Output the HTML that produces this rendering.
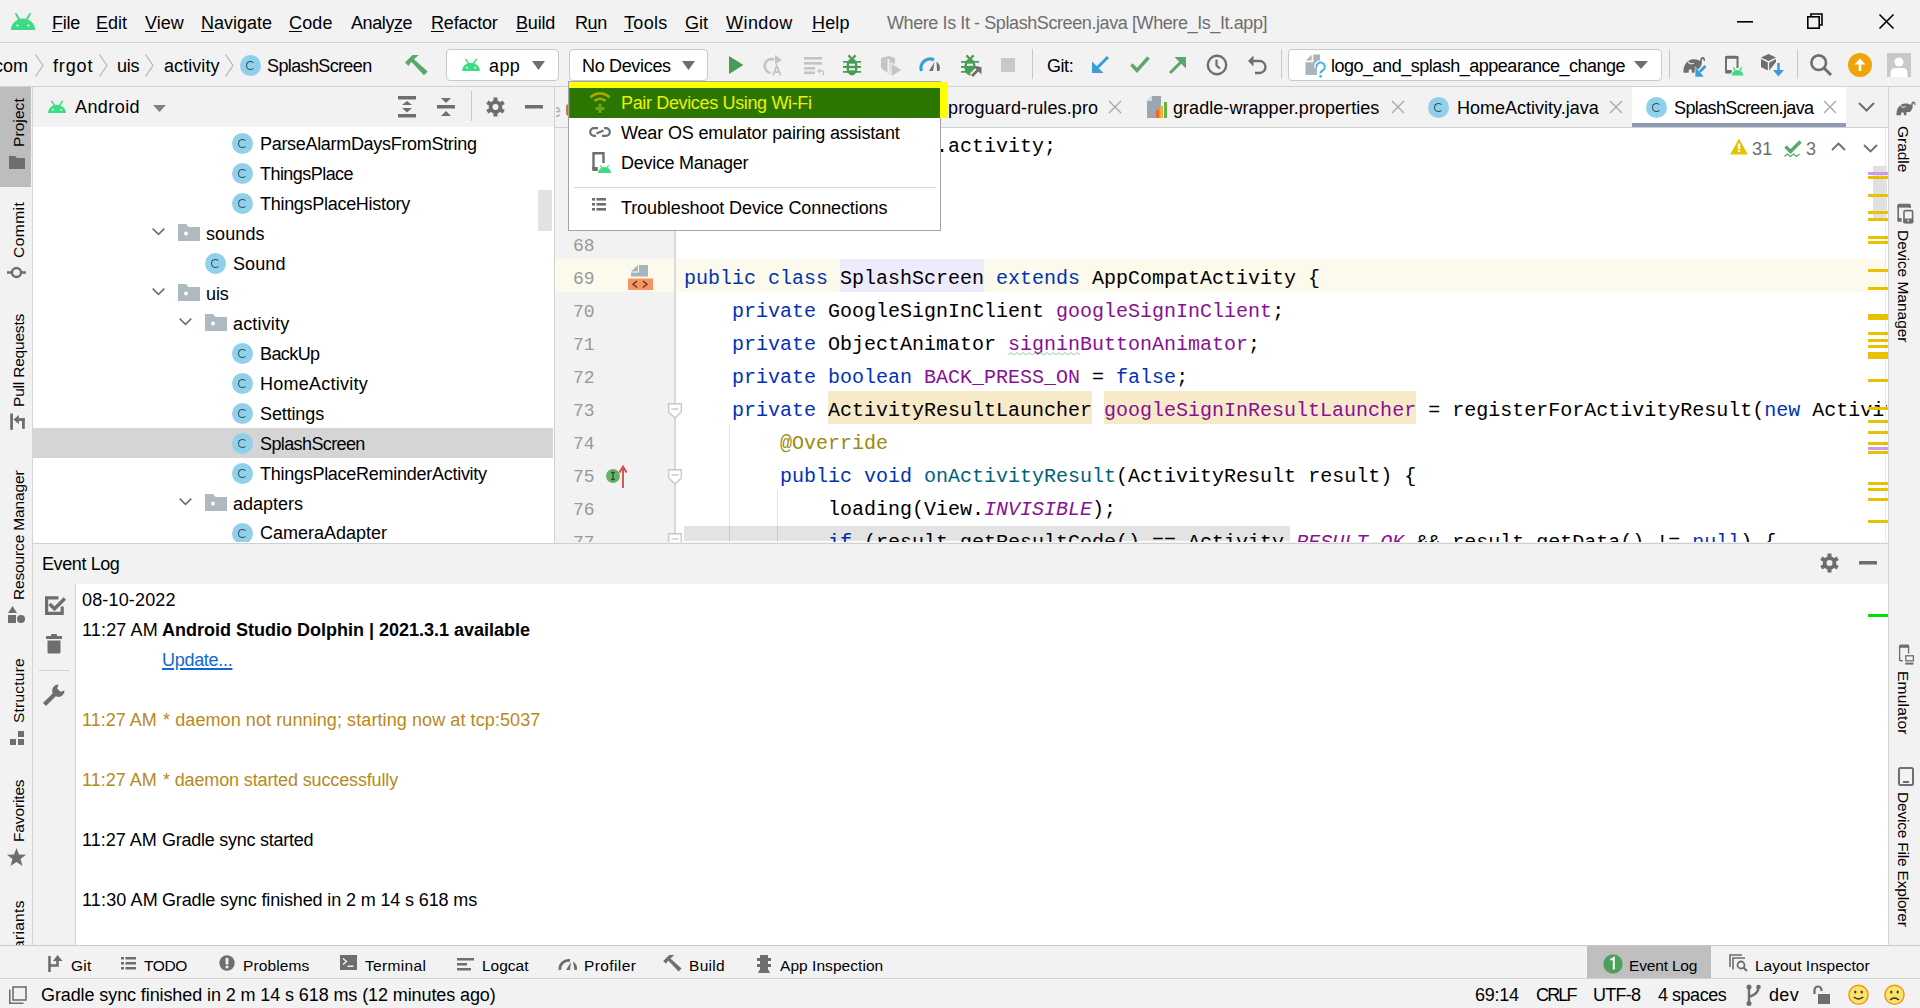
<!DOCTYPE html><html><head><meta charset="utf-8">
<style>
*{margin:0;padding:0;box-sizing:border-box}
html,body{width:1920px;height:1008px;overflow:hidden;background:#f2f2f2;font-family:"Liberation Sans",sans-serif;color:#000;position:relative}
.a{position:absolute}
.t{position:absolute;white-space:nowrap;font-size:18px;line-height:30px}
.m{text-decoration:underline;text-underline-offset:2px;text-decoration-thickness:1px}
.hl{position:absolute;height:1px;background:#d1d1d1}
.vl{position:absolute;width:1px;background:#d1d1d1}
.cm{position:absolute;white-space:pre;font-family:"Liberation Mono",monospace;font-size:20px;line-height:33px}
.k{color:#0033b3}.f{color:#871094}.an{color:#9e880d}.fn{color:#00627a}
.ln{position:absolute;font-family:"Liberation Mono",monospace;font-size:18px;line-height:33px;color:#999;white-space:nowrap}
svg{position:absolute;overflow:visible}
.ci{position:absolute;width:21px;height:21px;border-radius:50%;background:#8fd0ea}
.ci::after{content:"";position:absolute;left:6px;top:6px;width:9px;height:9px;border:1.5px solid #3a4a52;border-right-color:transparent;border-radius:50%;box-sizing:border-box}
.vt{position:absolute;white-space:nowrap;font-size:15.5px;line-height:20px;transform-origin:0 0}
.vup{transform:rotate(-90deg)}
.vdn{transform:rotate(90deg)}
</style></head><body>

<!-- ===== MENU BAR ===== -->
<svg style="left:11px;top:13px" width="24" height="17" viewBox="0 0 24 17"><path d="M0 17 A12 11.5 0 0 1 24 17 Z" fill="#3ddc84"></path><path d="M5 1 L8 6 M19 1 L16 6" stroke="#3ddc84" stroke-width="2" stroke-linecap="round"></path><circle cx="6.5" cy="12.5" r="1.1" fill="#fff"></circle><circle cx="17.5" cy="12.5" r="1.1" fill="#fff"></circle></svg>
<div class="t" style="left: 52px; top: 8px; letter-spacing: -0.27px;"><span class="m">F</span>ile</div>
<div class="t" style="left: 96px; top: 8px;"><span class="m">E</span>dit</div>
<div class="t" style="left: 145px; top: 8px;"><span class="m">V</span>iew</div>
<div class="t" style="left: 201px; top: 8px;"><span class="m">N</span>avigate</div>
<div class="t" style="left: 289px; top: 8px; letter-spacing: 0.16px;"><span class="m">C</span>ode</div>
<div class="t" style="left: 351px; top: 8px; letter-spacing: -0.41px;">Analy<span class="m">z</span>e</div>
<div class="t" style="left: 431px; top: 8px; letter-spacing: -0.17px;"><span class="m">R</span>efactor</div>
<div class="t" style="left: 516px; top: 8px; letter-spacing: -0.17px;"><span class="m">B</span>uild</div>
<div class="t" style="left: 575px; top: 8px; letter-spacing: -0.44px;">R<span class="m">u</span>n</div>
<div class="t" style="left: 624px; top: 8px; letter-spacing: 0.33px;"><span class="m">T</span>ools</div>
<div class="t" style="left: 685px; top: 8px; letter-spacing: 0.06px;"><span class="m">G</span>it</div>
<div class="t" style="left: 726px; top: 8px; letter-spacing: 0.44px;"><span class="m">W</span>indow</div>
<div class="t" style="left: 812px; top: 8px; letter-spacing: 0.17px;"><span class="m">H</span>elp</div>
<div class="t" style="left: 887px; top: 8px; color: rgb(110, 110, 110); letter-spacing: -0.41px;">Where Is It - SplashScreen.java [Where_Is_It.app]</div>
<svg style="left:1737px;top:21px" width="16" height="2"><rect width="16" height="1.6" fill="#000"></rect></svg>
<svg style="left:1807px;top:13px" width="16" height="16" viewBox="0 0 16 16"><path d="M4 3 V1 H15 V12 H13" fill="none" stroke="#000" stroke-width="1.6"></path><rect x="0.8" y="3.8" width="11.4" height="11.4" fill="none" stroke="#000" stroke-width="1.6"></rect></svg>
<svg style="left:1879px;top:14px" width="15" height="15" viewBox="0 0 15 15"><path d="M0.5 0.5 L14.5 14.5 M14.5 0.5 L0.5 14.5" stroke="#000" stroke-width="1.6"></path></svg>
<div class="hl" style="left:0;top:42px;width:1920px"></div>

<!-- ===== TOOLBAR ===== -->
<div class="t" style="left:-6px;top:51px">com</div>
<svg style="left:35px;top:54px" width="9" height="23" viewBox="0 0 9 23"><path d="M0.5 0.5 L8 11.5 L0.5 22.5" fill="none" stroke="#b4b4b4" stroke-width="1.2"></path></svg>
<div class="t" style="left: 53px; top: 51px; letter-spacing: 0.87px;">frgot</div>
<svg style="left:99px;top:54px" width="9" height="23" viewBox="0 0 9 23"><path d="M0.5 0.5 L8 11.5 L0.5 22.5" fill="none" stroke="#b4b4b4" stroke-width="1.2"></path></svg>
<div class="t" style="left: 117px; top: 51px; letter-spacing: -0.27px;">uis</div>
<svg style="left:145px;top:54px" width="9" height="23" viewBox="0 0 9 23"><path d="M0.5 0.5 L8 11.5 L0.5 22.5" fill="none" stroke="#b4b4b4" stroke-width="1.2"></path></svg>
<div class="t" style="left: 164px; top: 51px; letter-spacing: 0.07px;">activity</div>
<svg style="left:225px;top:54px" width="9" height="23" viewBox="0 0 9 23"><path d="M0.5 0.5 L8 11.5 L0.5 22.5" fill="none" stroke="#b4b4b4" stroke-width="1.2"></path></svg>
<div class="ci" style="left:240px;top:55px"></div>
<div class="t" style="left: 267px; top: 51px; letter-spacing: -0.63px;">SplashScreen</div>
<!-- hammer -->
<svg style="left:405px;top:55px" width="23" height="21" viewBox="0 0 23 21"><path d="M0 7.5 L7.5 0 H13.8 L8.9 4.3 L22.7 16.6 L19 20.3 L6.2 6.8 L3.5 10.9 Z" fill="#59a869"/></svg>
<!-- app combo -->
<div class="a" style="left:446px;top:49px;width:113px;height:32px;background:#fff;border:1px solid #c9c9c9;border-radius:4px"></div>
<svg style="left:462px;top:59px" width="18" height="12" viewBox="0 0 24 16"><path d="M0 16 A12 11 0 0 1 24 16 Z" fill="#3ddc84"></path><path d="M5 0.5 L8 5 M19 0.5 L16 5" stroke="#3ddc84" stroke-width="2" stroke-linecap="round"></path><circle cx="6.5" cy="11.5" r="1.2" fill="#fff"></circle><circle cx="17.5" cy="11.5" r="1.2" fill="#fff"></circle></svg>
<div class="t" style="left: 489px; top: 51px; letter-spacing: 0.38px;">app</div>
<svg style="left:532px;top:61px" width="13" height="9"><path d="M0 0 H13 L6.5 9 Z" fill="#6e6e6e"></path></svg>
<!-- No Devices combo -->
<div class="a" style="left:569px;top:49px;width:139px;height:32px;background:#fff;border:1px solid #c9c9c9;border-radius:4px"></div>
<div class="t" style="left: 582px; top: 51px; letter-spacing: -0.33px;">No Devices</div>
<svg style="left:682px;top:61px" width="13" height="9"><path d="M0 0 H13 L6.5 9 Z" fill="#6e6e6e"></path></svg>
<!-- run icons -->
<svg style="left:729px;top:56px" width="15" height="18"><path d="M0 0 L14.5 9 L0 18 Z" fill="#499c54"></path></svg>
<svg style="left:763px;top:55px" width="21" height="21" viewBox="0 0 21 21"><path d="M11 4.5 A7 7 0 1 0 7.5 18" fill="none" stroke="#c4c4c4" stroke-width="2.6"></path><path d="M12 0 L19 5 L12 9.5 Z" fill="#c4c4c4"></path><path d="M10 20.5 L13.8 10.5 L17.6 20.5 M11.5 17 H16" fill="none" stroke="#c4c4c4" stroke-width="1.8"></path></svg>
<svg style="left:804px;top:57px" width="22" height="18" viewBox="0 0 22 18"><rect x="0" y="0" width="18" height="2.6" fill="#c4c4c4"></rect><rect x="0" y="5" width="18" height="2.6" fill="#c4c4c4"></rect><rect x="0" y="10" width="11" height="2.6" fill="#c4c4c4"></rect><rect x="0" y="14.5" width="11" height="2.6" fill="#c4c4c4"></rect><path d="M16 12 L14 14 L16 16 M14.5 14 H18.5 A2.5 2.5 0 0 1 18.5 18" fill="none" stroke="#c4c4c4" stroke-width="1.3"></path></svg>
<svg style="left:842px;top:54px" width="20" height="22" viewBox="0 0 20 22"><path d="M6.4 1.4 L9.8 4.8 M13.6 1.4 L10.2 4.8" stroke="#499c54" stroke-width="2.2"/><ellipse cx="10" cy="13.1" rx="5.6" ry="8.5" fill="#499c54"/><path d="M1 7.9 H19 M1 13 H19 M1 17.9 H19" stroke="#499c54" stroke-width="1.9"/><rect x="7" y="9.7" width="6" height="2.1" fill="#f2f2f2"/><rect x="7" y="14.2" width="6" height="2.1" fill="#f2f2f2"/></svg>
<svg style="left:880px;top:56px" width="23" height="21" viewBox="0 0 23 21"><path d="M1 2 L9 0 L15 2 V10 L9 18 L1 12 Z" fill="#c4c4c4"></path><path d="M8.5 3 V17" stroke="#f2f2f2" stroke-width="2"></path><path d="M11 7 L22.5 14 L11 21 Z" fill="#c4c4c4" stroke="#f2f2f2" stroke-width="1.2"></path></svg>
<svg style="left:919px;top:57px" width="22" height="15" viewBox="0 0 22 15"><path d="M2.5 14 A9 9 0 0 1 15 3" fill="none" stroke="#389fd6" stroke-width="3.2"></path><path d="M10 14 L15.5 5 L14 14 Z" fill="#6e6e6e"></path><path d="M17.5 4.5 A9 9 0 0 1 20.5 14 L18 14 Z" fill="#6e6e6e"></path></svg>
<svg style="left:960px;top:54px" width="22" height="23" viewBox="0 0 22 23"><path d="M6.4 1.4 L9.8 4.8 M13.6 1.4 L10.2 4.8" stroke="#499c54" stroke-width="2.2"/><ellipse cx="10" cy="13.1" rx="5.6" ry="8.5" fill="#499c54"/><path d="M1 7.9 H19 M1 13 H19 M1 17.9 H14" stroke="#499c54" stroke-width="1.9"/><rect x="7" y="9.7" width="6" height="2.1" fill="#f2f2f2"/><path d="M11.5 21.5 L19 14" stroke="#f2f2f2" stroke-width="5"/><path d="M12 22 L19.5 14.5" stroke="#6e6e6e" stroke-width="2.6"/><path d="M14 13 H21.5 V20.5 Z" fill="#6e6e6e"/></svg>
<svg style="left:1001px;top:58px" width="14" height="14"><rect width="14" height="14" fill="#c8c8c8"></rect></svg>
<div class="vl" style="left:1032px;top:49px;height:30px;background:#c9c9c9"></div>
<div class="t" style="left: 1047px; top: 51px; letter-spacing: -0.45px;">Git:</div>
<svg style="left:1092px;top:56px" width="17" height="17" viewBox="0 0 17 17"><path d="M16 1 L4 13" stroke="#389fd6" stroke-width="3"></path><path d="M0 5.5 V17 H11.5 Z" fill="#389fd6"></path></svg>
<svg style="left:1130px;top:56px" width="20" height="17" viewBox="0 0 20 17"><path d="M1.5 8.5 L7 14.5 L18.5 1.5" fill="none" stroke="#59a869" stroke-width="3.4"></path></svg>
<svg style="left:1169px;top:57px" width="17" height="17" viewBox="0 0 17 17"><path d="M1 16 L13 4" stroke="#59a869" stroke-width="3"></path><path d="M5.5 0 H17 V11.5 Z" fill="#59a869"></path></svg>
<svg style="left:1206px;top:54px" width="22" height="22" viewBox="0 0 22 22"><circle cx="11" cy="11" r="9.2" fill="none" stroke="#6e6e6e" stroke-width="2.4"></circle><path d="M10.5 5.5 V11.5 L14 14.5" fill="none" stroke="#6e6e6e" stroke-width="2.2"></path></svg>
<svg style="left:1247px;top:55px" width="20" height="19" viewBox="0 0 20 19"><path d="M1 6 L6.5 0.5 V11.5 Z" fill="#6e6e6e"></path><path d="M5 6 H12.5 A6 6 0 0 1 12.5 18 H8" fill="none" stroke="#6e6e6e" stroke-width="2.4"></path></svg>
<div class="vl" style="left:1281px;top:49px;height:30px;background:#c9c9c9"></div>
<!-- branch combo -->
<div class="a" style="left:1288px;top:49px;width:374px;height:32px;background:#fff;border:1px solid #c9c9c9;border-radius:4px"></div>
<svg style="left:1305px;top:54px" width="21" height="24" viewBox="0 0 21 24"><path d="M0.9 6.5 L6.6 0.7 V6.5 Z" fill="#a9b4bc"/><path d="M8.3 0.4 H15 V8 H12 V21 H0.5 V8.2 H8.3 Z" fill="#a9b4bc"/><path d="M11.5 13.4 A4.2 4.2 0 1 1 18.3 16 Q15.5 17.5 15.5 19.6" fill="none" stroke="#fff" stroke-width="4.5"/><path d="M11.5 13.4 A4.2 4.2 0 1 1 18.3 16 Q15.5 17.5 15.5 19.6" fill="none" stroke="#40b6e0" stroke-width="2"/><circle cx="15.6" cy="22.3" r="1.4" fill="#40b6e0"/></svg>
<div class="t" style="left: 1331px; top: 51px; letter-spacing: -0.49px;">logo_and_splash_appearance_change</div>
<svg style="left:1634px;top:61px" width="14" height="8"><path d="M0 0 H14 L7 8 Z" fill="#6e6e6e"></path></svg>
<div class="vl" style="left:1669px;top:49px;height:30px;background:#c9c9c9"></div>
<svg style="left:1683px;top:56px" width="23" height="21" viewBox="0 0 23 21"><path d="M0.5 16.7 C0 9.5 4 3.5 10.5 3.3 C13.5 3.2 15.5 4 17 5 C17 2.5 18.5 0.8 20 1 C21.8 1.2 22.3 3.2 21.9 5.2 L20.6 5 C20.8 3.8 20.2 3 19.6 3.1 C18.9 3.2 18.8 4.5 18.9 6 C19 8.5 17.8 11.3 15.5 13 L12 13 L11.5 16.7 H9 L8.5 13.5 H6 L5.5 16.7 Z" fill="#6e6e6e"/><path d="M5 5.8 Q7.8 9.3 10.8 6.8" fill="none" stroke="#f2f2f2" stroke-width="1.1"/><path d="M14 18.5 L22.5 10" stroke="#f2f2f2" stroke-width="5"/><path d="M14.5 18 L22.5 10" stroke="#389fd6" stroke-width="2.8"/><path d="M12.3 10.75 V20.75 H21 Z" fill="#389fd6" stroke="#f2f2f2" stroke-width="0.6"/><path d="M12.6 11.5 V20.5 H20.3 Z" fill="#389fd6"/></svg>
<svg style="left:1725px;top:56px" width="19" height="20" viewBox="0 0 19 20"><path d="M1 14 V2 Q1 0.8 2.2 0.8 H11.3 Q12.5 0.8 12.5 2 V12" fill="none" stroke="#6e6e6e" stroke-width="2"/><rect x="0" y="0" width="13.5" height="2.8" rx="1" fill="#6e6e6e"/><rect x="0" y="13.9" width="6.9" height="3.7" rx="1" fill="#6e6e6e"/><path d="M6.2 19.6 A6.1 5.6 0 0 1 18.8 19.6 Z" fill="#f2f2f2" stroke="#f2f2f2" stroke-width="1.2"/><path d="M6.6 19.5 A5.9 5.4 0 0 1 18.4 19.5 Z" fill="#3ddc84"/><path d="M8.5 11.8 L9.8 14.2 M16.5 11.8 L15.2 14.2" stroke="#3ddc84" stroke-width="1.4" stroke-linecap="round"/></svg>
<svg style="left:1761px;top:54px" width="23" height="23" viewBox="0 0 23 23"><path d="M7.5 0 L15 3.5 L7.5 7 L0 3.5 Z" fill="#6e6e6e"></path><path d="M0 5 L6.8 8.4 V16.5 L0 13 Z" fill="#6e6e6e"></path><path d="M8.2 8.4 L15 5 V8 L8.2 16.5 Z" fill="#6e6e6e"></path><path d="M17.5 9 V20" stroke="#389fd6" stroke-width="2.6"></path><path d="M12 16 H23 L17.5 22.5 Z" fill="#389fd6"></path></svg>
<div class="vl" style="left:1797px;top:49px;height:30px;background:#c9c9c9"></div>
<svg style="left:1810px;top:54px" width="22" height="22" viewBox="0 0 22 22"><circle cx="8.7" cy="8.7" r="7.3" fill="none" stroke="#6e6e6e" stroke-width="2.6"></circle><path d="M14 14 L21 21" stroke="#6e6e6e" stroke-width="3"></path></svg>
<svg style="left:1848px;top:53px" width="24" height="24" viewBox="0 0 24 24"><circle cx="12" cy="12" r="12" fill="#f0a30a"></circle><path d="M12 18 V8" stroke="#fff" stroke-width="2.6"></path><path d="M6.5 11.5 L12 5.5 L17.5 11.5 Z" fill="#fff"></path></svg>
<svg style="left:1887px;top:53px" width="24" height="24" viewBox="0 0 24 24"><rect width="24" height="24" fill="#c8c8c8"></rect><circle cx="12" cy="9" r="4.5" fill="#fff"></circle><path d="M3.5 24 V20 Q3.5 15 8.5 15 H15.5 Q20.5 15 20.5 20 V24 Z" fill="#fff"></path></svg>
<div class="hl" style="left:0;top:86px;width:1920px"></div>

<!-- ===== LEFT STRIP ===== -->
<div class="a" style="left:0;top:87px;width:31px;height:100px;background:#bdbdbd"></div>
<div class="vl" style="left:32px;top:87px;height:858px;background:#d5d5d5"></div>
<div class="a" style="left:0;top:87px;width:32px;height:858px;overflow:hidden"><div class="a" style="left:0;top:-87px;width:32px;height:1008px"><div class="vt vup" style="left: 8.6px; top: 146.8px; letter-spacing: 0.08px;">Project</div>
<svg style="left:9px;top:156px" width="16" height="13" viewBox="0 0 16 13"><path d="M0 0 H6 L8 2 H16 V13 H0 Z" fill="#6e6e6e"></path></svg>
<div class="vt vup" style="left: 8.6px; top: 257.5px; letter-spacing: 0.47px;">Commit</div>
<svg style="left:7px;top:265px" width="19" height="15" viewBox="0 0 19 15"><circle cx="9.5" cy="7.5" r="4.5" fill="none" stroke="#6e6e6e" stroke-width="2.4"></circle><path d="M0 7.5 H5 M14 7.5 H19" stroke="#6e6e6e" stroke-width="2.4"></path></svg>
<div class="vt vup" style="left: 8.6px; top: 406.8px; letter-spacing: -0.2px;">Pull Requests</div>
<svg style="left:9px;top:413px" width="17" height="17" viewBox="0 0 17 17"><g fill="#6e6e6e"><rect x="1.2" y="0.5" width="2.8" height="16.3"/><path d="M4.5 6.6 L9.9 2 V11.2 Z"/><rect x="9.5" y="5.2" width="6.3" height="2.8"/><rect x="13" y="5.2" width="2.8" height="10.6"/></g></svg>
<div class="vt vup" style="left: 8.6px; top: 599.5px; letter-spacing: -0.15px;">Resource Manager</div>
<svg style="left:8px;top:606px" width="17" height="17" viewBox="0 0 17 17"><path d="M4.5 0 L9 7 H0 Z" fill="#6e6e6e"></path><rect x="0" y="9" width="8" height="8" fill="#6e6e6e"></rect><circle cx="13" cy="13" r="4" fill="#6e6e6e"></circle></svg>
<div class="vt vup" style="left: 8.6px; top: 723px; letter-spacing: 0.23px;">Structure</div>
<svg style="left:10px;top:731px" width="15" height="15" viewBox="0 0 15 15"><rect x="0" y="8" width="6" height="6" fill="#6e6e6e"></rect><rect x="8" y="8" width="6" height="6" fill="#6e6e6e"></rect><rect x="8" y="0" width="6" height="6" fill="#6e6e6e"></rect></svg>
<div class="vt vup" style="left: 8.6px; top: 842px; letter-spacing: -0.14px;">Favorites</div>
<svg style="left:7px;top:848px" width="19" height="18" viewBox="0 0 19 18"><path d="M9.5 0 L12 6.5 L19 6.8 L13.5 11 L15.5 18 L9.5 14 L3.5 18 L5.5 11 L0 6.8 L7 6.5 Z" fill="#6e6e6e"></path></svg>
<div class="vt vup" style="left: 8.6px; top: 998.7px; letter-spacing: 0.3px;">Build Variants</div></div></div>

<!-- ===== PROJECT PANEL ===== -->
<svg style="left:48px;top:101px" width="18" height="12" viewBox="0 0 24 16"><path d="M0 16 A12 11 0 0 1 24 16 Z" fill="#3ddc84"></path><path d="M5 0.5 L8 5 M19 0.5 L16 5" stroke="#3ddc84" stroke-width="2" stroke-linecap="round"></path><circle cx="6.5" cy="11.5" r="1.2" fill="#fff"></circle><circle cx="17.5" cy="11.5" r="1.2" fill="#fff"></circle></svg>
<div class="t" style="left: 75px; top: 92px; letter-spacing: 0.42px;">Android</div>
<svg style="left:153px;top:105px" width="13" height="7"><path d="M0 0 H13 L6.5 7 Z" fill="#808080"></path></svg>
<svg style="left:398px;top:96px" width="18" height="22" viewBox="0 0 18 22"><rect x="0" y="0" width="18" height="3.5" fill="#6e6e6e"></rect><rect x="0" y="18" width="18" height="3.5" fill="#6e6e6e"></rect><path d="M4 9 L9 5 L14 9 Z M4 12 H14 L9 16.5 Z" fill="#6e6e6e"></path></svg>
<svg style="left:437px;top:98px" width="18" height="18" viewBox="0 0 18 18"><path d="M4 0 H14 L9 5 Z" fill="#6e6e6e"></path><rect x="0" y="7" width="18" height="3.5" fill="#6e6e6e"></rect><path d="M4 18 H14 L9 13 Z" fill="#6e6e6e"></path></svg>
<div class="vl" style="left:471px;top:91px;height:30px;background:#c9c9c9"></div>
<svg style="left:486px;top:97px" width="19" height="20" viewBox="0 0 19 20"><g fill="#6e6e6e"><circle cx="9.5" cy="10" r="6.8"></circle><rect x="7.5" y="0.5" width="4" height="19"></rect><rect x="7.5" y="0.5" width="4" height="19" transform="rotate(60 9.5 10)"></rect><rect x="7.5" y="0.5" width="4" height="19" transform="rotate(120 9.5 10)"></rect></g><circle cx="9.5" cy="10" r="3" fill="#f2f2f2"></circle></svg>
<svg style="left:525px;top:105px" width="18" height="4"><rect width="18" height="3.5" fill="#6e6e6e"></rect></svg>

<div class="a" style="left:33px;top:127px;width:521px;height:416px;background:#fff"></div>
<div class="a" style="left:33px;top:428px;width:520px;height:30px;background:#d5d5d5"></div>
<div id="tree">
<div class="ci" style="left:232px;top:133px"></div><div class="t" style="left: 260px; top: 129px; letter-spacing: -0.31px;">ParseAlarmDaysFromString</div>
<div class="ci" style="left:232px;top:163px"></div><div class="t" style="left: 260px; top: 159px; letter-spacing: -0.55px;">ThingsPlace</div>
<div class="ci" style="left:232px;top:193px"></div><div class="t" style="left: 260px; top: 189px; letter-spacing: -0.29px;">ThingsPlaceHistory</div>
<svg style="left:152px;top:228px" width="13" height="7"><path d="M0.7 0.7 L6.5 6.3 L12.3 0.7" fill="none" stroke="#6e6e6e" stroke-width="1.6"></path></svg>
<svg style="left:178px;top:224px" width="22" height="17" viewBox="0 0 22 17"><path d="M0 0 H8 L10.5 3 H22 V17 H0 Z" fill="#aeb9c0"></path><circle cx="8" cy="9.5" r="2" fill="#fff"></circle></svg>
<div class="t" style="left: 206px; top: 219px; letter-spacing: 0.11px;">sounds</div>
<div class="ci" style="left:205px;top:253px"></div><div class="t" style="left: 233px; top: 249px; letter-spacing: 0.11px;">Sound</div>
<svg style="left:152px;top:288px" width="13" height="7"><path d="M0.7 0.7 L6.5 6.3 L12.3 0.7" fill="none" stroke="#6e6e6e" stroke-width="1.6"></path></svg>
<svg style="left:178px;top:284px" width="22" height="17" viewBox="0 0 22 17"><path d="M0 0 H8 L10.5 3 H22 V17 H0 Z" fill="#aeb9c0"></path><circle cx="8" cy="9.5" r="2" fill="#fff"></circle></svg>
<div class="t" style="left: 206px; top: 279px; letter-spacing: -0.11px;">uis</div>
<svg style="left:179px;top:318px" width="13" height="7"><path d="M0.7 0.7 L6.5 6.3 L12.3 0.7" fill="none" stroke="#6e6e6e" stroke-width="1.6"></path></svg>
<svg style="left:205px;top:314px" width="22" height="17" viewBox="0 0 22 17"><path d="M0 0 H8 L10.5 3 H22 V17 H0 Z" fill="#aeb9c0"></path><circle cx="8" cy="9.5" r="2" fill="#fff"></circle></svg>
<div class="t" style="left: 233px; top: 309px; letter-spacing: 0.17px;">activity</div>
<div class="ci" style="left:232px;top:343px"></div><div class="t" style="left: 260px; top: 339px; letter-spacing: -0.59px;">BackUp</div>
<div class="ci" style="left:232px;top:373px"></div><div class="t" style="left: 260px; top: 369px; letter-spacing: 0.25px;">HomeActivity</div>
<div class="ci" style="left:232px;top:403px"></div><div class="t" style="left: 260px; top: 399px; letter-spacing: -0.13px;">Settings</div>
<div class="ci" style="left:232px;top:433px"></div><div class="t" style="left: 260px; top: 429px; letter-spacing: -0.61px;">SplashScreen</div>
<div class="ci" style="left:232px;top:463px"></div><div class="t" style="left: 260px; top: 459px; letter-spacing: -0.27px;">ThingsPlaceReminderActivity</div>
<svg style="left:179px;top:498px" width="13" height="7"><path d="M0.7 0.7 L6.5 6.3 L12.3 0.7" fill="none" stroke="#6e6e6e" stroke-width="1.6"></path></svg>
<svg style="left:205px;top:494px" width="22" height="17" viewBox="0 0 22 17"><path d="M0 0 H8 L10.5 3 H22 V17 H0 Z" fill="#aeb9c0"></path><circle cx="8" cy="9.5" r="2" fill="#fff"></circle></svg>
<div class="t" style="left: 233px; top: 489px;">adapters</div>
<div class="a" style="left:33px;top:518px;width:520px;height:24px;overflow:hidden"><div class="ci" style="left:199px;top:5px"></div><div class="t" style="left:227px;top:0">CameraAdapter</div></div>
</div>
<div class="a" style="left:538px;top:190px;width:14px;height:41px;background:#e2e2e2"></div>
<div class="vl" style="left:554px;top:87px;height:456px"></div>
<!-- ===== EDITOR ===== -->
<div class="a" style="left:555px;top:87px;width:1333px;height:40px;background:#f2f2f2"></div>
<div class="hl" style="left:555px;top:127px;width:1333px"></div>
<div class="a" style="left:555px;top:128px;width:1333px;height:414px;background:#fff"></div>
<div class="a" style="left:555px;top:128px;width:119px;height:414px;background:#f2f2f2"></div>
<div class="vl" style="left:674px;top:128px;height:414px;width:2px;background:#d9d9d9"></div>
<div class="a" style="left:555px;top:259px;width:119px;height:33px;background:#fcfaed"></div>
<div class="a" style="left:676px;top:259px;width:1209px;height:33px;background:#fcfaed"></div>
<!-- tabs -->
<div class="t" style="left: 948px; top: 93px; letter-spacing: 0.12px;">proguard-rules.pro</div>
<svg style="left:1108px;top:100px" width="14" height="14" viewBox="0 0 14 14"><path d="M1 1 L13 13 M13 1 L1 13" stroke="#a8a8a8" stroke-width="1.4"></path></svg>
<svg style="left:1147px;top:96px" width="21" height="22" viewBox="0 0 21 22"><path d="M0 5 L5 0 H14 V22 H0 Z" fill="#9aa7b0"></path><path d="M0 5 H5 V0" fill="#d5dadd"></path><rect x="9" y="14" width="3" height="8" fill="#f26522"></rect><rect x="13" y="10" width="3" height="12" fill="#f4af3d"></rect><rect x="17" y="6" width="3" height="16" fill="#62b543"></rect></svg>
<div class="t" style="left: 1173px; top: 93px; letter-spacing: 0.05px;">gradle-wrapper.properties</div>
<svg style="left:1391px;top:100px" width="14" height="14" viewBox="0 0 14 14"><path d="M1 1 L13 13 M13 1 L1 13" stroke="#a8a8a8" stroke-width="1.4"></path></svg>
<div class="ci" style="left:1428px;top:97px"></div>
<div class="t" style="left: 1457px; top: 93px;">HomeActivity.java</div>
<svg style="left:1609px;top:100px" width="14" height="14" viewBox="0 0 14 14"><path d="M1 1 L13 13 M13 1 L1 13" stroke="#a8a8a8" stroke-width="1.4"></path></svg>
<div class="a" style="left:1632px;top:87px;width:214px;height:40px;background:#fff"></div>
<div class="a" style="left:1632px;top:123px;width:214px;height:4px;background:#8d9bb0"></div>
<div class="ci" style="left:1646px;top:97px"></div>
<div class="t" style="left: 1674px; top: 93px; letter-spacing: -0.63px;">SplashScreen.java</div>
<svg style="left:1823px;top:100px" width="14" height="14" viewBox="0 0 14 14"><path d="M1 1 L13 13 M13 1 L1 13" stroke="#a8a8a8" stroke-width="1.4"></path></svg>
<svg style="left:1858px;top:102px" width="17" height="10" viewBox="0 0 17 10"><path d="M1 1 L8.5 8.5 L16 1" fill="none" stroke="#6e6e6e" stroke-width="2"></path></svg>

<!-- inspection widget -->
<svg style="left:1730px;top:138px" width="18" height="17" viewBox="0 0 18 17"><path d="M9 0.5 L17.8 16.5 H0.2 Z" fill="#e5c100"/><rect x="7.8" y="5.5" width="2.4" height="5.5" fill="#fff"/><rect x="7.8" y="12" width="2.4" height="2.2" fill="#fff"/></svg>
<div class="t" style="left:1752px;top:134px;color:#6e6e6e;font-size:18px;letter-spacing:0.3px">31</div>
<svg style="left:1784px;top:140px" width="18" height="18" viewBox="0 0 18 18"><path d="M1.5 6.5 L6.5 11.5 L16.5 1.5" fill="none" stroke="#59a869" stroke-width="3.4"/><path d="M0.5 16.5 L3.5 14 L6.5 16.5 L9.5 14 L12.5 16.5 L15.5 14" fill="none" stroke="#59a869" stroke-width="1.3"/></svg>
<div class="t" style="left:1806px;top:134px;color:#6e6e6e;font-size:18px">3</div>
<svg style="left:1831px;top:142px" width="15" height="9" viewBox="0 0 15 9"><path d="M1 8 L7.5 1.5 L14 8" fill="none" stroke="#6e6e6e" stroke-width="1.8"></path></svg>
<svg style="left:1863px;top:144px" width="15" height="9" viewBox="0 0 15 9"><path d="M1 1 L7.5 7.5 L14 1" fill="none" stroke="#6e6e6e" stroke-width="1.8"></path></svg>

<div id="code">
<div class="ln" style="left:573px;top:230px">68</div>
<div class="ln" style="left:573px;top:263px">69</div>
<div class="ln" style="left:573px;top:296px">70</div>
<div class="ln" style="left:573px;top:329px">71</div>
<div class="ln" style="left:573px;top:362px">72</div>
<div class="ln" style="left:573px;top:395px">73</div>
<div class="ln" style="left:573px;top:428px">74</div>
<div class="ln" style="left:573px;top:461px">75</div>
<div class="ln" style="left:573px;top:494px">76</div>
<div class="a" style="left:555px;top:525px;width:100px;height:17px;overflow:hidden"><div class="ln" style="left:18px;top:2px">77</div></div>

<!-- gutter icons -->
<svg style="left:628px;top:265px" width="25" height="25" viewBox="0 0 25 25"><path d="M3 6.5 L10 0 V6.5 Z" fill="#a8b4bc"></path><path d="M11 0 H20 V11.6 H3 V7.6 H11 Z" fill="#a8b4bc"></path><rect x="0" y="13.5" width="25" height="11.5" fill="#f79462"></rect><path d="M9 16 L5 19.3 L9 22.5 M15 16 L19 19.3 L15 22.5" fill="none" stroke="#5a3a28" stroke-width="1.4"></path></svg>
<svg style="left:606px;top:466px" width="24" height="22" viewBox="0 0 24 22"><circle cx="7" cy="10" r="7" fill="#6ab06a"></circle><path d="M5 6.5 H9 M7 6.5 V13.5 M5 13.5 H9" stroke="#2f4f2f" stroke-width="1.3"></path><path d="M17 22 V3" stroke="#d64545" stroke-width="1.8"></path><path d="M13.5 6.5 L17 0.5 L20.5 6.5" fill="none" stroke="#d64545" stroke-width="1.8"></path></svg>
<svg style="left:668px;top:403px" width="14" height="16" viewBox="0 0 14 16"><path d="M0.7 0.7 H13.3 V9 L7 15 L0.7 9 Z" fill="#fff" stroke="#c8c8c8" stroke-width="1.4"></path><path d="M3.5 6 H10.5" stroke="#c8c8c8" stroke-width="1.4"></path></svg>
<svg style="left:668px;top:469px" width="14" height="16" viewBox="0 0 14 16"><path d="M0.7 0.7 H13.3 V9 L7 15 L0.7 9 Z" fill="#fff" stroke="#c8c8c8" stroke-width="1.4"></path><path d="M3.5 6 H10.5" stroke="#c8c8c8" stroke-width="1.4"></path></svg>
<div class="a" style="left:668px;top:533px;width:14px;height:9px;overflow:hidden"><svg style="left:0;top:0" width="14" height="16" viewBox="0 0 14 16"><path d="M0.7 0.7 H13.3 V9 L7 15 L0.7 9 Z" fill="#fff" stroke="#c8c8c8" stroke-width="1.4"></path><path d="M3.5 6 H10.5" stroke="#c8c8c8" stroke-width="1.4"></path></svg></div>
<div class="vl" style="left:729px;top:424px;height:118px;background:#e3e3e3"></div>
<div class="vl" style="left:777px;top:490px;height:52px;background:#e3e3e3"></div>

<div class="a" style="left:840px;top:259px;width:144px;height:33px;background:#edebfc"></div>
<div class="a" style="left:828px;top:391px;width:264px;height:33px;background:#f6eac9"></div>
<div class="a" style="left:1104px;top:391px;width:312px;height:33px;background:#f6eac9"></div>

<div class="cm" style="left:936px;top:130px">.activity;</div>
<div class="cm" style="left:684px;top:262px"><span class="k">public class</span> SplashScreen <span class="k">extends</span> AppCompatActivity {</div>
<div class="cm" style="left:684px;top:295px">    <span class="k">private</span> GoogleSignInClient <span class="f">googleSignInClient</span>;</div>
<div class="cm" style="left:684px;top:328px">    <span class="k">private</span> ObjectAnimator <span class="f">signinButtonAnimator</span>;</div>
<svg style="left:1008px;top:352px" width="72" height="4" viewBox="0 0 72 4"><path d="M0 3 L3 0.5 L6 3 L9 0.5 L12 3 L15 0.5 L18 3 L21 0.5 L24 3 L27 0.5 L30 3 L33 0.5 L36 3 L39 0.5 L42 3 L45 0.5 L48 3 L51 0.5 L54 3 L57 0.5 L60 3 L63 0.5 L66 3 L69 0.5 L72 3" fill="none" stroke="#8fc98f" stroke-width="0.9"></path></svg>
<div class="cm" style="left:684px;top:361px">    <span class="k">private boolean</span> <span class="f">BACK_PRESS_ON</span> = <span class="k">false</span>;</div>
<div class="a" style="left:684px;top:391px;width:1203px;height:33px;overflow:hidden"><div class="cm" style="left:0;top:3px">    <span class="k">private</span> ActivityResultLauncher <span class="f">googleSignInResultLauncher</span> = registerForActivityResult(<span class="k">new</span> ActivityResultContracts</div></div>
<div class="cm" style="left:684px;top:427px">        <span class="an">@Override</span></div>
<div class="cm" style="left:684px;top:460px">        <span class="k">public void</span> <span class="fn">onActivityResult</span>(ActivityResult result) {</div>
<div class="cm" style="left:684px;top:493px">            loading(View.<span class="f" style="font-style:italic">INVISIBLE</span>);</div>
<div class="a" style="left:684px;top:524px;width:1203px;height:18px;overflow:hidden"><div class="cm" style="left:0;top:2px">            <span class="k">if</span> (result.getResultCode() == Activity.<span class="f" style="font-style:italic">RESULT_OK</span> &amp;&amp; result.getData() != <span class="k">null</span>) {</div></div>
</div>
<div class="a" style="left:684px;top:526px;width:606px;height:15px;background:rgba(0,0,0,0.11)"></div>

<!-- error stripe -->
<div class="a" style="left:1873px;top:166px;width:14px;height:54px;background:#e0e0e0"></div>
<div class="vl" style="left:1885px;top:128px;height:414px;background:#e8e8e8"></div>
<div id="stripe">
<div class="a" style="left:1868px;top:172px;width:20px;height:3px;background:#cc99ee"></div>
<div class="a" style="left:1868px;top:176px;width:20px;height:3px;background:#e8c100"></div>
<div class="a" style="left:1868px;top:194px;width:20px;height:3px;background:#e8c100"></div>
<div class="a" style="left:1868px;top:211px;width:20px;height:3px;background:#e8c100"></div>
<div class="a" style="left:1868px;top:218px;width:20px;height:3px;background:#e8c100"></div>
<div class="a" style="left:1868px;top:236px;width:20px;height:3px;background:#e8c100"></div>
<div class="a" style="left:1868px;top:241px;width:20px;height:3px;background:#e8c100"></div>
<div class="a" style="left:1868px;top:269px;width:20px;height:3px;background:#e8c100"></div>
<div class="a" style="left:1868px;top:287px;width:20px;height:3px;background:#e8c100"></div>
<div class="a" style="left:1868px;top:314px;width:20px;height:6px;background:#e8c100"></div>
<div class="a" style="left:1868px;top:332px;width:20px;height:3px;background:#e8c100"></div>
<div class="a" style="left:1868px;top:339px;width:20px;height:3px;background:#e8c100"></div>
<div class="a" style="left:1868px;top:345px;width:20px;height:3px;background:#e8c100"></div>
<div class="a" style="left:1868px;top:352px;width:20px;height:7px;background:#e8c100"></div>
<div class="a" style="left:1868px;top:379px;width:20px;height:3px;background:#e8c100"></div>
<div class="a" style="left:1868px;top:407px;width:20px;height:3px;background:#e8c100"></div>
<div class="a" style="left:1868px;top:420px;width:20px;height:3px;background:#e8c100"></div>
<div class="a" style="left:1868px;top:431px;width:20px;height:3px;background:#e8c100"></div>
<div class="a" style="left:1868px;top:442px;width:20px;height:3px;background:#e8c100"></div>
<div class="a" style="left:1868px;top:447px;width:20px;height:3px;background:#cc99ee"></div>
<div class="a" style="left:1868px;top:451px;width:20px;height:3px;background:#e8c100"></div>
<div class="a" style="left:1868px;top:482px;width:20px;height:3px;background:#e8c100"></div>
<div class="a" style="left:1868px;top:488px;width:20px;height:3px;background:#e8c100"></div>
<div class="a" style="left:1868px;top:498px;width:20px;height:3px;background:#e8c100"></div>
<div class="a" style="left:1868px;top:520px;width:20px;height:3px;background:#e8c100"></div>
</div>

<!-- ===== RIGHT STRIP ===== -->
<div class="vl" style="left:1888px;top:87px;height:858px;background:#d5d5d5"></div>
<svg style="left:1896px;top:101px" width="20" height="15" viewBox="0 0.5 22.5 17"><path d="M0.5 16.7 C0 9.5 4 3.5 10.5 3.3 C13.5 3.2 15.5 4 17 5 C17 2.5 18.5 0.8 20 1 C21.8 1.2 22.3 3.2 21.9 5.2 L20.6 5 C20.8 3.8 20.2 3 19.6 3.1 C18.9 3.2 18.8 4.5 18.9 6 C19 8.5 17.8 11.3 15.5 13 L12 13 L11.5 16.7 H9 L8.5 13.5 H6 L5.5 16.7 Z" fill="#6e6e6e"/><path d="M5 5.8 Q7.8 9.3 10.8 6.8" fill="none" stroke="#f2f2f2" stroke-width="1.1"/></svg>
<div class="vt vdn" style="left: 1913.3px; top: 126.2px; letter-spacing: -0.04px;">Gradle</div>
<svg style="left:1897px;top:204px" width="17" height="20" viewBox="0 0 17 20"><path d="M1.2 15.5 V1.5 Q1.2 0.6 2.1 0.6 H12.2 Q13.1 0.6 13.1 1.5 V4" fill="none" stroke="#6e6e6e" stroke-width="1.6"/><rect x="0.4" y="1" width="12.6" height="2.6" fill="#6e6e6e"/><rect x="0.4" y="14" width="4.2" height="3.8" fill="#6e6e6e"/><rect x="7" y="6.6" width="8.6" height="12.2" rx="1.2" fill="none" stroke="#6e6e6e" stroke-width="1.6"/><rect x="6.3" y="14.4" width="10" height="4.9" rx="1" fill="#6e6e6e"/><circle cx="11.3" cy="16.6" r="0.9" fill="#f2f2f2"/></svg>
<div class="vt vdn" style="left: 1913.3px; top: 229.5px; letter-spacing: -0.03px;">Device Manager</div>
<svg style="left:1899px;top:645px" width="15" height="20" viewBox="0 0 15 20"><path d="M0.6 14 V1 Q0.6 0.2 1.4 0.2 H8.8 Q9.6 0.2 9.6 1 V8.6" fill="none" stroke="#6e6e6e" stroke-width="1.3"/><rect x="0.2" y="0.2" width="9.8" height="2.6" fill="#6e6e6e"/><path d="M0.6 12.5 V15 Q0.6 15.7 1.4 15.7 H3.8" fill="none" stroke="#6e6e6e" stroke-width="1.4"/><rect x="6.8" y="10.8" width="7.6" height="5" fill="none" stroke="#6e6e6e" stroke-width="1.3"/><rect x="6.2" y="17.6" width="8.3" height="2" fill="#6e6e6e"/></svg>
<div class="vt vdn" style="left: 1913.3px; top: 670.5px; letter-spacing: 0.21px;">Emulator</div>
<svg style="left:1898px;top:767px" width="16" height="19" viewBox="0 0 16 19"><rect x="1" y="1" width="14" height="17" rx="1.5" fill="none" stroke="#6e6e6e" stroke-width="2"></rect><rect x="5" y="14" width="6" height="2" fill="#6e6e6e"></rect></svg>
<div class="vt vdn" style="left: 1913.3px; top: 792.2px; letter-spacing: -0.2px;">Device File Explorer</div>
<!-- ===== EVENT LOG ===== -->
<div class="hl" style="left:33px;top:543px;width:1855px"></div>
<div class="t" style="left: 42px; top: 549px; letter-spacing: -0.4px;">Event Log</div>
<svg style="left:1820px;top:553px" width="19" height="20" viewBox="0 0 19 20"><g fill="#6e6e6e"><circle cx="9.5" cy="10" r="6.8"></circle><rect x="7.5" y="0.5" width="4" height="19"></rect><rect x="7.5" y="0.5" width="4" height="19" transform="rotate(60 9.5 10)"></rect><rect x="7.5" y="0.5" width="4" height="19" transform="rotate(120 9.5 10)"></rect></g><circle cx="9.5" cy="10" r="3" fill="#f2f2f2"></circle></svg>
<svg style="left:1859px;top:561px" width="18" height="4"><rect width="18" height="3.5" fill="#6e6e6e"></rect></svg>
<div class="a" style="left:76px;top:584px;width:1812px;height:361px;background:#fff"></div>
<div class="vl" style="left:75px;top:584px;height:361px"></div>
<svg style="left:45px;top:596px" width="21" height="19" viewBox="0 0 21 19"><path d="M13.5 1.8 H1.6 V17.4 H17.2 V10.5" fill="none" stroke="#6e6e6e" stroke-width="3.2"/><path d="M4.6 8 L9.5 12.8 L19.8 2.5" fill="none" stroke="#6e6e6e" stroke-width="3.4"/></svg>
<svg style="left:46px;top:634px" width="16" height="20" viewBox="0 0 16 20"><rect x="0" y="2" width="16" height="3" rx="0.5" fill="#6e6e6e"></rect><rect x="5" y="0" width="6" height="3" rx="1" fill="#6e6e6e"></rect><path d="M1.5 6.5 H14.5 V18 Q14.5 19.5 13 19.5 H3 Q1.5 19.5 1.5 18 Z" fill="#6e6e6e"></path></svg>
<div class="hl" style="left:39px;top:670px;width:30px;background:#d0d0d0"></div>
<svg style="left:44px;top:684px" width="21" height="21" viewBox="0 0 21 21"><path d="M2 19 L10 11" stroke="#6e6e6e" stroke-width="4.2" stroke-linecap="square"/><path d="M14.5 0.5 A6.2 6.2 0 1 0 20.5 6.5 L16.5 7.8 L13.2 4.5 Z" fill="#6e6e6e"/></svg>
<div class="a" style="left:1868px;top:614px;width:20px;height:3px;background:#00e000"></div>

<div class="t" style="left: 82px; top: 585px; letter-spacing: 0.16px;">08-10-2022</div>
<div class="t" style="left: 82px; top: 615px; letter-spacing: 0.15px;">11:27 AM</div><div class="t" style="left: 162px; top: 615px; font-weight: bold;">Android Studio Dolphin | 2021.3.1 available</div>
<div class="t" style="left: 162px; top: 645px; color: #0e6ad2; text-decoration: underline; text-underline-offset: 2px; text-decoration-thickness: 1.5px; letter-spacing: -0.29px;">Update...</div>
<div class="t" style="left:82px;top:705px;color:#b58a1d">11:27 AM</div><div class="t" style="left: 163px; top: 705px; color: rgb(181, 138, 29); letter-spacing: 0.09px;">* daemon not running; starting now at tcp:5037</div>
<div class="t" style="left:82px;top:765px;color:#b58a1d">11:27 AM</div><div class="t" style="left: 163px; top: 765px; color: rgb(181, 138, 29); letter-spacing: -0.14px;">* daemon started successfully</div>
<div class="t" style="left:82px;top:825px">11:27 AM</div><div class="t" style="left: 162px; top: 825px; letter-spacing: -0.26px;">Gradle sync started</div>
<div class="t" style="left: 82px; top: 885px; letter-spacing: 0.15px;">11:30 AM</div><div class="t" style="left: 162px; top: 885px; letter-spacing: -0.13px;">Gradle sync finished in 2 m 14 s 618 ms</div>
<div class="hl" style="left:0;top:945px;width:1920px;background:#c9c9c9"></div>

<!-- ===== BOTTOM BAR ===== -->
<svg style="left:48px;top:955px" width="15" height="17" viewBox="0 0 15 17"><path d="M1.5 1 V17" stroke="#6e6e6e" stroke-width="2.6"></path><path d="M1.5 10.5 H9.5 V4" fill="none" stroke="#6e6e6e" stroke-width="2.6"></path><path d="M5 6 L9.5 0 L14.5 6 Z" fill="#6e6e6e"></path></svg>
<div class="t" style="left: 71px; top: 951px; font-size: 15.5px; letter-spacing: 0.3px;">Git</div>
<svg style="left:121px;top:957px" width="15" height="13" viewBox="0 0 15 13"><g fill="#6e6e6e"><rect x="0" y="0" width="3" height="2.5"></rect><rect x="4.5" y="0" width="10.5" height="2.5"></rect><rect x="0" y="5" width="3" height="2.5"></rect><rect x="4.5" y="5" width="10.5" height="2.5"></rect><rect x="0" y="10" width="3" height="2.5"></rect><rect x="4.5" y="10" width="10.5" height="2.5"></rect></g></svg>
<div class="t" style="left: 144px; top: 951px; font-size: 15.5px; letter-spacing: -0.4px;">TODO</div>
<svg style="left:219px;top:955px" width="16" height="16" viewBox="0 0 16 16"><circle cx="8" cy="8" r="7.7" fill="#6e6e6e"></circle><rect x="6.6" y="3" width="2.8" height="6.5" fill="#f2f2f2"></rect><rect x="6.6" y="10.8" width="2.8" height="2.5" fill="#f2f2f2"></rect></svg>
<div class="t" style="left: 243px; top: 951px; font-size: 15.5px; letter-spacing: 0.1px;">Problems</div>
<svg style="left:340px;top:955px" width="17" height="15" viewBox="0 0 17 15"><rect width="17" height="15" fill="#6e6e6e"></rect><path d="M3 3.5 L6.5 6.5 L3 9.5" fill="none" stroke="#f2f2f2" stroke-width="1.4"></path><rect x="7.5" y="10.5" width="6" height="1.5" fill="#f2f2f2"></rect></svg>
<div class="t" style="left: 365px; top: 951px; font-size: 15.5px; letter-spacing: 0.33px;">Terminal</div>
<svg style="left:457px;top:958px" width="17" height="13" viewBox="0 0 17 13"><g fill="#6e6e6e"><rect x="0" y="0" width="17" height="2.5"></rect><rect x="0" y="5" width="10" height="2.5"></rect><rect x="0" y="10" width="14" height="2.5"></rect></g></svg>
<div class="t" style="left: 482px; top: 951px; font-size: 15.5px;">Logcat</div>
<svg style="left:558px;top:958px" width="20" height="12" viewBox="0 0 20 12"><path d="M2 12 A8.5 8.5 0 0 1 12 2.5" fill="none" stroke="#6e6e6e" stroke-width="2.8"></path><path d="M8 12 L13 4 L12 12 Z" fill="#6e6e6e"></path><path d="M15 3.5 A8.5 8.5 0 0 1 19 12 L16.5 12 Z" fill="#6e6e6e"></path></svg>
<div class="t" style="left: 584px; top: 951px; font-size: 15.5px; letter-spacing: 0.39px;">Profiler</div>
<svg style="left:663px;top:955px" width="19" height="17" viewBox="0 0 23 21"><path d="M0 7.5 L7.5 0 H13.8 L8.9 4.3 L22.7 16.6 L19 20.3 L6.2 6.8 L3.5 10.9 Z" fill="#6e6e6e"/></svg>
<div class="t" style="left: 689px; top: 951px; font-size: 15.5px; letter-spacing: 0.29px;">Build</div>
<svg style="left:756px;top:955px" width="16" height="18" viewBox="0 0 16 18"><path d="M4 0 H12 V3 H15 V6 H12 V9 H15 V12 H12 V14 L14 18 H2 L4 14 V12 H1 V9 H4 V6 H1 V3 H4 Z" fill="#6e6e6e"></path></svg>
<div class="t" style="left: 780px; top: 951px; font-size: 15.5px; letter-spacing: 0.05px;">App Inspection</div>
<div class="a" style="left:1587px;top:946px;width:124px;height:32px;background:#bfbfbf"></div>
<svg style="left:1603px;top:954px" width="20" height="20" viewBox="0 0 20 20"><circle cx="10" cy="10" r="9.7" fill="#4da05c"></circle><path d="M7.5 6 L10.8 4 V15.5" fill="none" stroke="#fff" stroke-width="2"></path></svg>
<div class="t" style="left: 1629px; top: 951px; font-size: 15.5px; letter-spacing: -0.17px;">Event Log</div>
<svg style="left:1729px;top:954px" width="19" height="17" viewBox="0 0 19 17"><path d="M1 13 V1 H13 M4 15.5 V4 H16" fill="none" stroke="#6e6e6e" stroke-width="1.6"></path><circle cx="12" cy="11" r="3.5" fill="none" stroke="#6e6e6e" stroke-width="1.8"></circle><path d="M14.5 13.5 L18 17" stroke="#6e6e6e" stroke-width="2.2"></path></svg>
<div class="t" style="left: 1755px; top: 951px; font-size: 15.5px;">Layout Inspector</div>
<div class="hl" style="left:0;top:978px;width:1920px"></div>

<!-- ===== STATUS BAR ===== -->
<svg style="left:9px;top:986px" width="18" height="18" viewBox="0 0 18 18"><rect x="4" y="1" width="13" height="13" fill="none" stroke="#6e6e6e" stroke-width="1.6"></rect><path d="M0.8 3.5 V17.2 H14.5" fill="none" stroke="#6e6e6e" stroke-width="1.6"></path></svg>
<div class="t" style="left: 41px; top: 980px; letter-spacing: -0.1px;">Gradle sync finished in 2 m 14 s 618 ms (12 minutes ago)</div>
<div class="t" style="left: 1475px; top: 980px; letter-spacing: -0.25px;">69:14</div>
<div class="t" style="left: 1536px; top: 980px; letter-spacing: -1.83px;">CRLF</div>
<div class="t" style="left: 1593px; top: 980px; letter-spacing: -0.72px;">UTF-8</div>
<div class="t" style="left: 1658px; top: 980px; letter-spacing: -0.48px;">4 spaces</div>
<svg style="left:1746px;top:984px" width="15" height="22" viewBox="0 0 15 22"><circle cx="3" cy="3" r="2.5" fill="#6e6e6e"></circle><circle cx="3" cy="19.5" r="2.5" fill="#6e6e6e"></circle><circle cx="12.5" cy="3" r="2.3" fill="#6e6e6e"></circle><path d="M3 3 V19.5 M12.5 3 Q12.5 10 3 13" fill="none" stroke="#6e6e6e" stroke-width="2.4"></path></svg>
<div class="t" style="left: 1769px; top: 980px; letter-spacing: 0.32px;">dev</div>
<svg style="left:1812px;top:985px" width="18" height="19" viewBox="0 0 18 19"><path d="M2.5 9 V5 A3.5 3.5 0 0 1 9.5 5 V6" fill="none" stroke="#6e6e6e" stroke-width="2.2"></path><rect x="6" y="9" width="12" height="10" fill="#6e6e6e"></rect></svg>
<svg style="left:1848px;top:984px" width="21" height="21" viewBox="0 0 21 21"><circle cx="10.5" cy="10.8" r="9.6" fill="#fde26a" stroke="#e59c12" stroke-width="1.4"/><ellipse cx="7.3" cy="8" rx="1.1" ry="1.6" fill="#333"/><ellipse cx="13.7" cy="8" rx="1.1" ry="1.6" fill="#333"/><path d="M5.8 13 Q10.5 16.8 15.2 13" fill="none" stroke="#333" stroke-width="1.5"/></svg>
<svg style="left:1884px;top:984px" width="21" height="21" viewBox="0 0 21 21"><circle cx="10.5" cy="10.8" r="9.6" fill="#fde26a" stroke="#e59c12" stroke-width="1.4"/><ellipse cx="7.3" cy="8" rx="1.1" ry="1.6" fill="#333"/><ellipse cx="13.7" cy="8" rx="1.1" ry="1.6" fill="#333"/><path d="M6 16 Q10.5 12 15 16" fill="none" stroke="#333" stroke-width="1.5"/></svg>

<div class="a" style="left:556px;top:105px;width:6px;height:12px;overflow:hidden"><div class="t" style="left:-5px;top:-9px;color:#b0b0b0;font-size:18px">e</div></div>
<div class="a" style="left:566px;top:104px;width:3px;height:12px;background:#c27b2a;border-radius:3px 0 0 3px"></div>
<!-- ===== POPUP ===== -->
<div class="a" style="left:568px;top:81px;width:373px;height:150px;background:#fff;border:1px solid #a3a3a3"></div>
<div class="a" style="left:569px;top:82px;width:379px;height:6px;background:#ffff00"></div>
<div class="a" style="left:940px;top:82px;width:8px;height:36px;background:#ffff00"></div>
<div class="a" style="left:569px;top:88px;width:371px;height:30px;background:#2a7600;border-left:1px solid #3a78c8"></div>
<svg style="left:589px;top:91px" width="22" height="23" viewBox="0 0 22 23"><path d="M1.5 6.5 A13 13 0 0 1 20.5 6.5" fill="none" stroke="#a6a600" stroke-width="2.6"></path><path d="M5.5 10 A8 8 0 0 1 16.5 10" fill="none" stroke="#a6a600" stroke-width="2.6"></path><path d="M11 12.5 V22 M6.5 17.5 H15.5" stroke="#6aa31c" stroke-width="2.8"></path></svg>
<div class="t" style="left: 621px; top: 88px; color: rgb(240, 240, 0); letter-spacing: -0.35px;">Pair Devices Using Wi-Fi</div>
<svg style="left:589px;top:127px" width="22" height="10" viewBox="0 0 22 10"><path d="M9 1.2 H5 A3.8 3.8 0 0 0 5 8.8 H7 M13 8.8 H17 A3.8 3.8 0 0 0 17 1.2 H15 M7.5 6.5 L14.5 3.5" fill="none" stroke="#6e6e6e" stroke-width="2.2"></path></svg>
<div class="t" style="left: 621px; top: 118px; letter-spacing: -0.15px;">Wear OS emulator pairing assistant</div>
<svg style="left:592px;top:152px" width="19" height="21" viewBox="0 0 19 21"><path d="M1.5 17 V1.3 H11.5 V11" fill="none" stroke="#6e6e6e" stroke-width="2.4"></path><rect x="0.3" y="15" width="5.5" height="4" fill="#6e6e6e"></rect><path d="M6 21 A6.5 6 0 0 1 19 21 Z" fill="#3ddc84"></path><path d="M8.5 13.5 L10 16 M16.5 13.5 L15 16" stroke="#3ddc84" stroke-width="1.4"></path></svg>
<div class="t" style="left: 621px; top: 148px; letter-spacing: -0.28px;">Device Manager</div>
<div class="hl" style="left:574px;top:187px;width:362px;background:#d8d8d8"></div>
<svg style="left:592px;top:198px" width="14" height="13" viewBox="0 0 14 13"><g fill="#6e6e6e"><rect x="0" y="0" width="3" height="2.6"></rect><rect x="4.5" y="0" width="9.5" height="2.6"></rect><rect x="0" y="5" width="3" height="2.6"></rect><rect x="4.5" y="5" width="9.5" height="2.6"></rect><rect x="0" y="10" width="3" height="2.6"></rect><rect x="4.5" y="10" width="9.5" height="2.6"></rect></g></svg>
<div class="t" style="left: 621px; top: 193px; letter-spacing: -0.1px;">Troubleshoot Device Connections</div>

</body></html>
